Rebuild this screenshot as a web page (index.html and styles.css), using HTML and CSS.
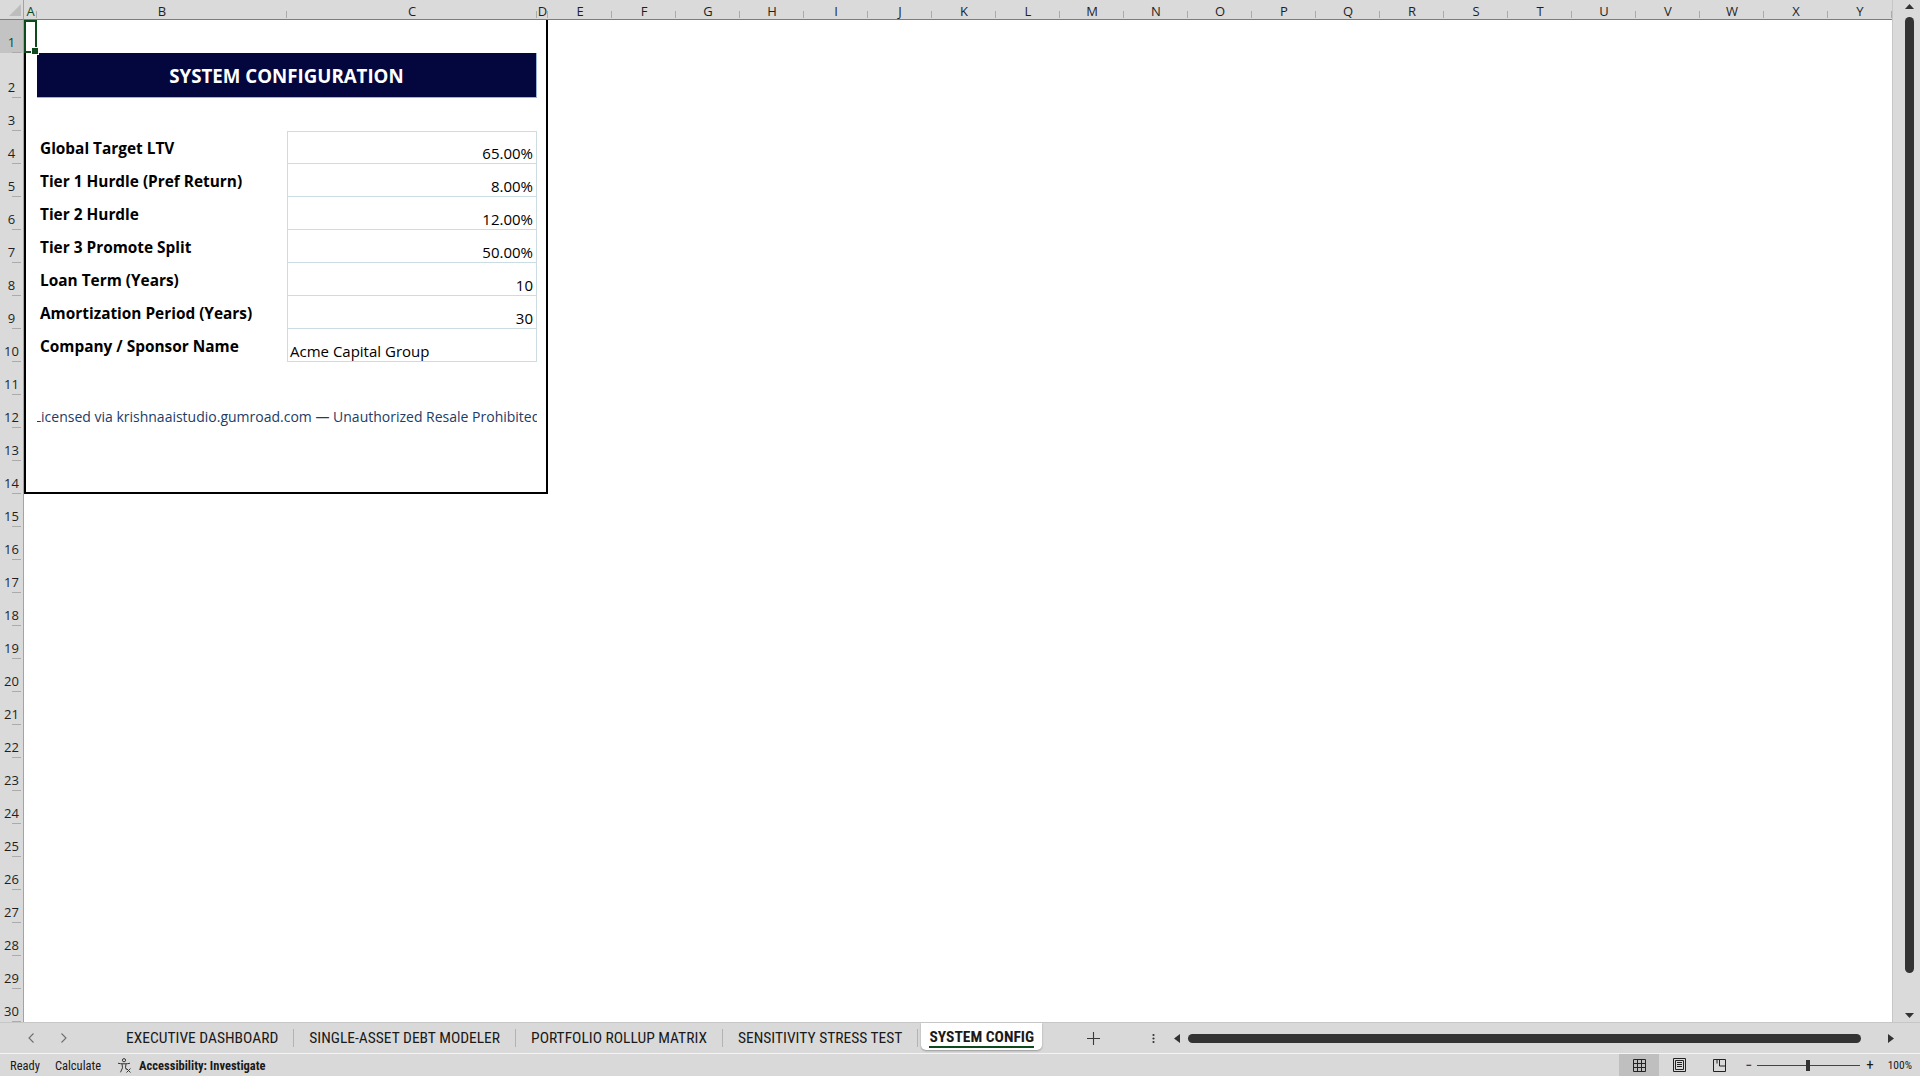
FILE: index.html
```html
<!DOCTYPE html>
<html lang="en">
<head>
    <meta charset="UTF-8">
    <meta name="viewport" content="width=device-width, initial-scale=1.0">
    <title>System Config</title>
    <link rel="stylesheet" href="styles.css">
</head>
<body>
<div class="app">
    <div class="sheet">
        <div class="grid">
            <!-- column headers -->
            <div class="corner"><svg width="23" height="19" viewBox="0 0 23 19"><polygon points="9,16 21,16 21,4" fill="#bdbdbd"/></svg></div>
            <div class="col-head sel">A</div>
            <div class="col-head">B</div>
            <div class="col-head">C</div>
            <div class="col-head">D</div>
            <div class="col-head">E</div>
            <div class="col-head">F</div>
            <div class="col-head">G</div>
            <div class="col-head">H</div>
            <div class="col-head">I</div>
            <div class="col-head">J</div>
            <div class="col-head">K</div>
            <div class="col-head">L</div>
            <div class="col-head">M</div>
            <div class="col-head">N</div>
            <div class="col-head">O</div>
            <div class="col-head">P</div>
            <div class="col-head">Q</div>
            <div class="col-head">R</div>
            <div class="col-head">S</div>
            <div class="col-head">T</div>
            <div class="col-head">U</div>
            <div class="col-head">V</div>
            <div class="col-head">W</div>
            <div class="col-head">X</div>
            <div class="col-head">Y</div>

            <!-- row headers -->
            <div class="row-head sel">1</div>
            <div class="row-head">2</div>
            <div class="row-head">3</div>
            <div class="row-head">4</div>
            <div class="row-head">5</div>
            <div class="row-head">6</div>
            <div class="row-head">7</div>
            <div class="row-head">8</div>
            <div class="row-head">9</div>
            <div class="row-head">10</div>
            <div class="row-head">11</div>
            <div class="row-head">12</div>
            <div class="row-head">13</div>
            <div class="row-head">14</div>
            <div class="row-head">15</div>
            <div class="row-head">16</div>
            <div class="row-head">17</div>
            <div class="row-head">18</div>
            <div class="row-head">19</div>
            <div class="row-head">20</div>
            <div class="row-head">21</div>
            <div class="row-head">22</div>
            <div class="row-head">23</div>
            <div class="row-head">24</div>
            <div class="row-head">25</div>
            <div class="row-head">26</div>
            <div class="row-head">27</div>
            <div class="row-head">28</div>
            <div class="row-head">29</div>
            <div class="row-head">30</div>

            <!-- A1:D14 config block -->
            <div class="panel">
                <div class="title">SYSTEM CONFIGURATION</div>
                <div class="config">
                    <div class="label">Global Target LTV</div>
                    <div class="value first">65.00%</div>
                    <div class="label">Tier 1 Hurdle (Pref Return)</div>
                    <div class="value">8.00%</div>
                    <div class="label">Tier 2 Hurdle</div>
                    <div class="value">12.00%</div>
                    <div class="label">Tier 3 Promote Split</div>
                    <div class="value">50.00%</div>
                    <div class="label">Loan Term (Years)</div>
                    <div class="value">10</div>
                    <div class="label">Amortization Period (Years)</div>
                    <div class="value">30</div>
                    <div class="label">Company / Sponsor Name</div>
                    <div class="value text">Acme Capital Group</div>
                </div>
                <div class="notice"><span>Licensed via krishnaaistudio.gumroad.com — Unauthorized Resale Prohibited</span></div>
            </div>
            <div class="selection"></div>
        </div>

        <div class="vscroll">
            <svg width="9" height="5" viewBox="0 0 9 5"><polygon points="0,5 9,5 4.5,0" fill="#333"/></svg>
            <div class="thumb"></div>
            <svg class="down" width="9" height="5" viewBox="0 0 9 5"><polygon points="0,0 9,0 4.5,5" fill="#333"/></svg>
        </div>
    </div>

    <div class="tabbar">
        <div class="tab-nav">
            <svg width="6" height="10" viewBox="0 0 6 10"><polyline points="5.5,0.5 1,5 5.5,9.5" fill="none" stroke="#6e6e6e" stroke-width="1.1"/></svg>
            <svg width="6" height="10" viewBox="0 0 6 10"><polyline points="0.5,0.5 5,5 0.5,9.5" fill="none" stroke="#6e6e6e" stroke-width="1.1"/></svg>
        </div>
        <div class="tabs">
            <div class="tab">EXECUTIVE DASHBOARD</div>
            <span class="sep"></span>
            <div class="tab">SINGLE-ASSET DEBT MODELER</div>
            <span class="sep"></span>
            <div class="tab">PORTFOLIO ROLLUP MATRIX</div>
            <span class="sep"></span>
            <div class="tab">SENSITIVITY STRESS TEST</div>
            <span class="sep"></span>
            <div class="tab active"><span>SYSTEM CONFIG</span></div>
            <span class="sep"></span>
        </div>
        <div class="add-sheet">
            <svg width="13" height="13" viewBox="0 0 13 13"><path d="M6.5 0v13M0 6.5h13" stroke="#3a3a3a" stroke-width="1.1"/></svg>
        </div>
        <div class="more">
            <svg width="3" height="11" viewBox="0 0 3 11"><circle cx="1.5" cy="2" r="1.1" fill="#333"/><circle cx="1.5" cy="5.5" r="1.1" fill="#333"/><circle cx="1.5" cy="9" r="1.1" fill="#333"/></svg>
        </div>
        <div class="hscroll">
            <svg width="6" height="9" viewBox="0 0 6 9"><polygon points="6,0 6,9 0,4.5" fill="#333"/></svg>
            <div class="thumb"></div>
            <svg class="right" width="6" height="9" viewBox="0 0 6 9"><polygon points="0,0 0,9 6,4.5" fill="#333"/></svg>
        </div>
    </div>

    <div class="statusbar">
        <span class="st-ready">Ready</span>
        <span class="st-calc">Calculate</span>
        <svg class="st-icon" width="15" height="15" viewBox="0 0 15 15">
            <circle cx="7" cy="2.2" r="1.6" fill="none" stroke="#333" stroke-width="1"/>
            <path d="M1 5.2c2 .8 10 .8 12 0M5 5.8l.5 4M9 5.8l-.5 4M5.5 9.8l-2 4.5M8.5 9.8l1 2" fill="none" stroke="#333" stroke-width="1"/>
            <path d="M9.5 10.5l4 4M13.5 10.5l-4 4" stroke="#333" stroke-width="1"/>
        </svg>
        <span class="st-access">Accessibility: Investigate</span>

        <div class="views">
            <div class="view on">
                <svg width="13" height="13" viewBox="0 0 13 13"><path d="M.5.5h12v12H.5zM.5 4.5h12M.5 8.5h12M4.5.5v12M8.5.5v12" fill="none" stroke="#222"/></svg>
            </div>
            <div class="view">
                <svg width="13" height="14" viewBox="0 0 13 14"><path d="M.5.5h12v13H.5zM2.5 2.5h8v9h-8zM4 4.5h5M4 6.5h5M4 8.5h5" fill="none" stroke="#222"/></svg>
            </div>
            <div class="view">
                <svg width="13" height="13" viewBox="0 0 13 13"><path d="M.5.5h12v12H.5zM6.5.5v6.5h6M4 .5v4" fill="none" stroke="#222"/></svg>
            </div>
        </div>
        <div class="zoom">
            <span class="zoom-minus">−</span>
            <div class="slider">
                <span class="track left"></span>
                <span class="knob"></span>
                <span class="track"></span>
            </div>
            <span class="zoom-plus">+</span>
            <span class="zoom-level">100%</span>
        </div>
    </div>
</div>
</body>
</html>
```

FILE: styles.css
```css
* {
    box-sizing: border-box;
}
body {
    margin: 0;
    font-family: "Open Sans", Arial, sans-serif;
    background-color: #fff;
    color: #000;
    overflow: hidden;
}
.app {
    width: 1920px;
    height: 1076px;
    display: flex;
    flex-direction: column;
}

/* sheet area */
.sheet {
    display: flex;
    height: 1022px;
}
.grid {
    width: 1892px;
    display: grid;
    grid-template-columns: 24px 13px 250px 250px 11px repeat(21, 64px);
    grid-template-rows: 20px 33px 45px repeat(28, 33px);
    background-color: #fff;
}
.corner {
    background-color: #dadada;
    border-right: 1px solid #a3a3a3;
    border-bottom: 1px solid #7c7c7c;
}
.corner svg {
    display: block;
}
.col-head {
    position: relative;
    display: flex;
    align-items: center;
    justify-content: center;
    padding-top: 2px;
    background-color: #dadada;
    border-bottom: 1px solid #7c7c7c;
    font-size: 13px;
    color: #1f1f1f;
}
.col-head::after {
    content: "";
    position: absolute;
    right: 0;
    bottom: 1px;
    width: 1px;
    height: 7px;
    background-color: #ababab;
}
.col-head.sel {
    color: #0d4a1c;
}
.row-head {
    grid-column: 1;
    position: relative;
    display: flex;
    align-items: flex-end;
    justify-content: center;
    padding-bottom: 2px;
    background-color: #dadada;
    border-right: 1px solid #a3a3a3;
    font-size: 13px;
    color: #1f1f1f;
}
.row-head::after {
    content: "";
    position: absolute;
    right: 2px;
    bottom: 0;
    width: 9px;
    height: 1px;
    background-color: #ababab;
}
.row-head.sel {
    background-color: #c3c3c3;
    color: #0d4a1c;
}

/* config block */
.panel {
    grid-column: 2 / 6;
    grid-row: 2 / 16;
    display: grid;
    grid-template-columns: 11px 250px 250px 9px;
    grid-template-rows: 33px 45px repeat(11, 33px) 31px;
    border: 2px solid #000;
    border-top: 0;
}
.title {
    grid-column: 2 / 4;
    grid-row: 2;
    display: flex;
    align-items: center;
    justify-content: center;
    background-color: #03073d;
    border-right: 1px solid #98b4d6;
    border-bottom: 1px solid #98b4d6;
    color: #fff;
    font-weight: 700;
    font-size: 18.7px;
}
.config {
    grid-column: 2 / 4;
    grid-row: 4 / 11;
    display: grid;
    grid-template-columns: 250px 250px;
    grid-auto-rows: 33px;
}
.label {
    display: flex;
    align-items: center;
    padding: 2px 0 0 3px;
    font-weight: 700;
    font-size: 15.4px;
    white-space: nowrap;
}
.value {
    display: flex;
    align-items: flex-end;
    justify-content: flex-end;
    padding-right: 3px;
    border: 1px solid #cbdde2;
    border-top: 0;
    font-size: 15px;
    line-height: 20px;
}
.value.first {
    border-top: 1px solid #cbdde2;
}
.value.text {
    justify-content: flex-start;
    padding-left: 2px;
}
.notice {
    grid-column: 2 / 4;
    grid-row: 12;
    display: flex;
    align-items: flex-end;
    justify-content: center;
    overflow: hidden;
    white-space: nowrap;
    padding-bottom: 1px;
    font-size: 14px;
    line-height: 20px;
    color: #223c66;
}
.selection {
    grid-column: 2;
    grid-row: 2;
    position: relative;
    z-index: 2;
    border: 2px solid #0d4a1c;
}
.selection::after {
    content: "";
    position: absolute;
    right: -4px;
    bottom: -4px;
    width: 6px;
    height: 6px;
    background-color: #0d4a1c;
    border: 1px solid #fff;
}

/* vertical scrollbar */
.vscroll {
    width: 28px;
    display: flex;
    flex-direction: column;
    align-items: center;
    padding: 4px 0 4px 5px;
    background-color: #dadada;
    border-left: 1px solid #c6c6c6;
}
.vscroll .thumb {
    width: 9px;
    height: 956px;
    margin-top: 8px;
    background-color: #333;
    border-radius: 5px;
}
.vscroll .down {
    margin-top: auto;
}

/* sheet tabs */
.tabbar {
    height: 32px;
    display: flex;
    background-color: #d9d9d9;
    border-top: 1px solid #c6c6c6;
    border-bottom: 1px solid #f4f4f4;
    font-family: "Liberation Sans Narrow", "Roboto Condensed", Roboto, sans-serif;
    font-size: 15.5px;
    color: #1a1a1a;
}
.tab-nav {
    width: 111px;
    display: flex;
    align-items: center;
    gap: 27px;
    padding-left: 28px;
}
.tabs {
    width: 934px;
    display: flex;
    align-items: center;
    overflow: hidden;
}
.tab {
    padding: 0 15px;
    white-space: nowrap;
}
.sep {
    width: 1px;
    height: 18px;
    flex-shrink: 0;
    background-color: #b3b3b3;
}
.tab.active {
    align-self: stretch;
    display: flex;
    align-items: center;
    margin: 0 3px 3px;
    padding: 0 8px;
    background-color: #fff;
    border-radius: 0 0 5px 5px;
    box-shadow: 0 1px 2px rgba(0,0,0,0.3);
    font-weight: 700;
}
.tab.active span {
    padding: 3px 0 0;
    border-bottom: 2px solid #0d4a1c;
}
.add-sheet {
    width: 96px;
    display: flex;
    align-items: center;
    justify-content: center;
}
.more {
    width: 24px;
    display: flex;
    align-items: center;
    justify-content: center;
}
.hscroll {
    flex: 1;
    display: flex;
    align-items: center;
    padding: 0 26px 0 9px;
}
.hscroll .thumb {
    width: 673px;
    height: 9px;
    margin-left: 8px;
    background-color: #333;
    border-radius: 5px;
}
.hscroll .right {
    margin-left: auto;
}

/* status bar */
.statusbar {
    height: 22px;
    display: flex;
    align-items: center;
    padding-left: 10px;
    background-color: #d9d9d9;
    font-family: "Liberation Sans Narrow", "Roboto Condensed", Roboto, sans-serif;
    font-size: 12.5px;
    color: #1a1a1a;
}
.st-calc {
    margin-left: 15px;
}
.st-icon {
    margin-left: 16px;
}
.st-access {
    margin-left: 7px;
    font-weight: 700;
}
.views {
    margin-left: auto;
    align-self: stretch;
    display: flex;
}
.view {
    width: 40px;
    display: flex;
    align-items: center;
    justify-content: center;
}
.view.on {
    background-color: #bfbfbf;
}
.zoom {
    display: flex;
    align-items: center;
    padding-right: 8px;
    font-size: 12px;
}
.zoom-minus {
    margin-left: 6px;
    font-size: 14px;
}
.slider {
    display: flex;
    align-items: center;
    margin-left: 5px;
}
.track {
    width: 50px;
    height: 1px;
    background-color: #444;
}
.track.left {
    width: 49px;
}
.knob {
    width: 4px;
    height: 11px;
    background-color: #333;
}
.zoom-plus {
    margin-left: 6px;
    font-size: 15px;
}
.zoom-level {
    margin-left: 14px;
    font-size: 11.5px;
}
```
